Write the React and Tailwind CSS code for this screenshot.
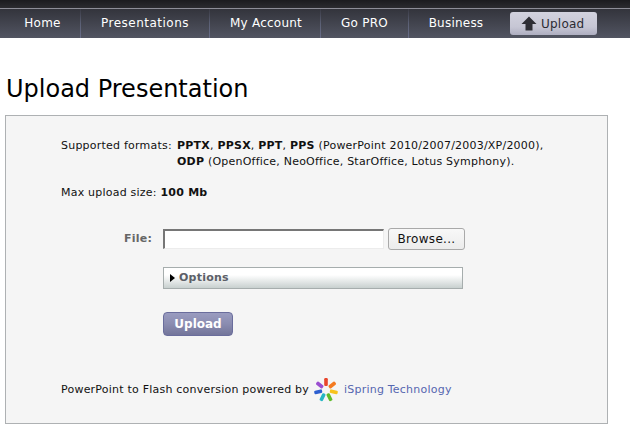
import React from "react";

const font = { fontFamily: '"DejaVu Sans", Verdana, sans-serif' };

function NavItem({ children, w, pad, last }) {
  return (
    <div className={`flex h-full items-center ${w}`}>
      <span className={`-mt-[1px] flex-1 text-center text-[12px] text-white ${pad || ""}`}>{children}</span>
      {last ? null : <div className="h-full w-[1px] bg-gradient-to-b from-[#3a3b45] via-[#5b6075] to-[#686d88]" />}
    </div>
  );
}

function Logo() {
  const colors = ["#e8452c", "#f47a20", "#f7c31c", "#5fbb2a", "#25b6c4", "#2c5fd0", "#9a4fd0"];
  return (
    <svg width="26" height="26" viewBox="0 0 26 26" className="ml-[4px] mr-[5px]">
      {colors.map((c, i) => (
        <rect key={c} x="11.2" y="1" width="3.6" height="8" rx="1.2" fill={c} transform={`rotate(${(i * 360) / 7} 13 13)`} />
      ))}
    </svg>
  );
}

export default function App() {
  return (
    <div className="h-[435px] w-[630px] overflow-hidden bg-white text-[11px] tracking-[0.22px] text-[#111]" style={font}>
      <div className="h-[8px] bg-gradient-to-b from-[#1b1b1f] to-[#2b2b30]" />
      <div className="h-[1px] bg-[#8d8d98]" />
      <nav className="flex h-[29px] bg-gradient-to-b from-[#33343c] to-[#525562]">
        <NavItem w="w-[81px]" pad="pl-[5px]">Home</NavItem>
        <NavItem w="w-[129px]" pad="tracking-[0.5px]">Presentations</NavItem>
        <NavItem w="w-[111px]" pad="pl-[2px]">My Account</NavItem>
        <NavItem w="w-[88px]">Go PRO</NavItem>
        <NavItem w="w-[101px]" pad="pr-[7px]" last>Business</NavItem>
        <div className="mt-[3px] flex h-[23px] w-[87px] items-center gap-[4px] rounded-[3px] bg-[linear-gradient(#d2d2de_0%,#c6c6d4_65%,#aeaec0_100%)] pl-[11px] text-[12px] text-[#2b2b33]">
          <svg width="16" height="15" viewBox="0 0 16 15">
            <path d="M8 0.5 L15.5 8 H11.5 V14.5 H4.5 V8 H0.5 Z" fill="#2e2e35" />
          </svg>
          <span>Upload</span>
        </div>
      </nav>

      <h1 className="ml-[6px] mt-[37px] h-[40px] text-[24px] font-normal leading-[28px] tracking-normal text-black">
        Upload Presentation
      </h1>

      <section className="ml-[5px] h-[309px] w-[603px] border border-[#aeb1b3] bg-[#f5f5f5] pl-[55px] pt-[22px]">
        <div className="flex leading-[16px]">
          <span className="w-[116px]">Supported formats:</span>
          <div>
            <div><b>PPTX</b>, <b>PPSX</b>, <b>PPT</b>, <b>PPS</b> (PowerPoint 2010/2007/2003/XP/2000),</div>
            <div><b>ODP</b> (OpenOffice, NeoOffice, StarOffice, Lotus Symphony).</div>
          </div>
        </div>
        <div className="mt-[15px] leading-[16px]">
          Max upload size: <b>100 Mb</b>
        </div>

        <div className="mt-[27px] flex items-center">
          <label className="w-[102px] pr-[11px] text-right font-bold text-[#666]">File:</label>
          <div className="h-[20px] w-[221px] border-2 border-b border-r border-[#ececec] border-l-[#767676] border-t-[#767676] bg-white" />
          <button className="ml-[4px] h-[22px] w-[77px] rounded-[3px] border border-[#a9a9a9] bg-[linear-gradient(#f8f8f8,#ececec)] text-[12px] tracking-[0.3px] text-[#111]">
            Browse...
          </button>
        </div>

        <div className="ml-[102px] mt-[17px] flex h-[22px] w-[300px] items-center border border-[#a6adad] bg-[linear-gradient(#ffffff_0%,#ffffff_35%,#c8d0cf_100%)] pl-[6px]">
          <svg width="5" height="8" viewBox="0 0 5 8"><path d="M0 0 L5 4 L0 8 Z" fill="#000" /></svg>
          <span className="ml-[4px] font-bold text-[#5c6068]">Options</span>
        </div>

        <button className="ml-[102px] mt-[23px] block h-[24px] w-[70px] rounded-[4px] border border-[#6a6d9c] bg-[linear-gradient(#9a9cc0_0%,#8a8cb0_50%,#73759a_100%)] text-[12px] font-bold tracking-normal text-white">
          Upload
        </button>

        <div className="mt-[41px] flex items-center">
          <span>PowerPoint to Flash conversion powered by</span>
          <Logo />
          <span className="text-[#5566b0]">iSpring Technology</span>
        </div>
      </section>
    </div>
  );
}
